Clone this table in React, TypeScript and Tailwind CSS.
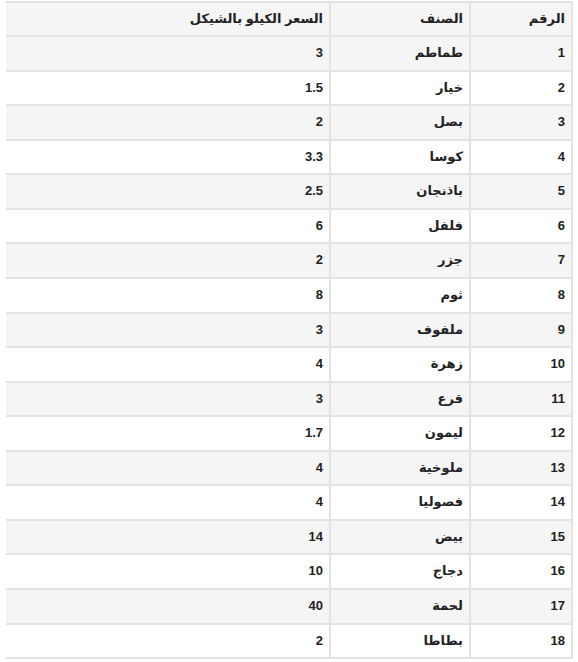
const rows: [number, string, string][] = [
  [1, 'طماطم', '3'],
  [2, 'خيار', '1.5'],
  [3, 'بصل', '2'],
  [4, 'كوسا', '3.3'],
  [5, 'باذنجان', '2.5'],
  [6, 'فلفل', '6'],
  [7, 'جزر', '2'],
  [8, 'ثوم', '8'],
  [9, 'ملفوف', '3'],
  [10, 'زهرة', '4'],
  [11, 'قرع', '3'],
  [12, 'ليمون', '1.7'],
  [13, 'ملوخية', '4'],
  [14, 'فصوليا', '4'],
  [15, 'بيض', '14'],
  [16, 'دجاج', '10'],
  [17, 'لحمة', '40'],
  [18, 'بطاطا', '2'],
];

export default function App() {
  return (
    <div
      dir="rtl"
      className="min-h-screen bg-white pl-[6px] pr-[5px] pt-[1px] text-[13px] font-bold text-[#222]"
      style={{ fontFamily: '"Liberation Sans", "DejaVu Sans", sans-serif' }}
    >
      <table className="w-full border-collapse border-2 border-l-0 border-[#e3e3e3] text-right">
        <thead>
          <tr className="bg-[#f5f5f5]">
            <th className="w-[102px] border-2 border-[#e3e3e3] px-[6px] py-[8px] leading-[16px]">الرقم</th>
            <th className="w-[140px] border-2 border-[#e3e3e3] px-[6px] py-[8px] leading-[16px]">الصنف</th>
            <th className="border-2 border-l-0 border-[#e3e3e3] px-[6px] py-[8px] leading-[16px]">السعر الكيلو بالشيكل</th>
          </tr>
        </thead>
        <tbody>
          {rows.map(([n, name, price]) => (
            <tr key={n} className={n % 2 === 1 ? 'bg-[#f5f5f5]' : 'bg-white'}>
              <td className="border-2 border-[#e3e3e3] px-[6px] py-[8px] leading-[16.56px]">{n}</td>
              <td className="border-2 border-[#e3e3e3] px-[6px] py-[8px] leading-[16.56px]">{name}</td>
              <td className="border-2 border-l-0 border-[#e3e3e3] px-[6px] py-[8px] leading-[16.56px]">{price}</td>
            </tr>
          ))}
        </tbody>
      </table>
    </div>
  );
}
